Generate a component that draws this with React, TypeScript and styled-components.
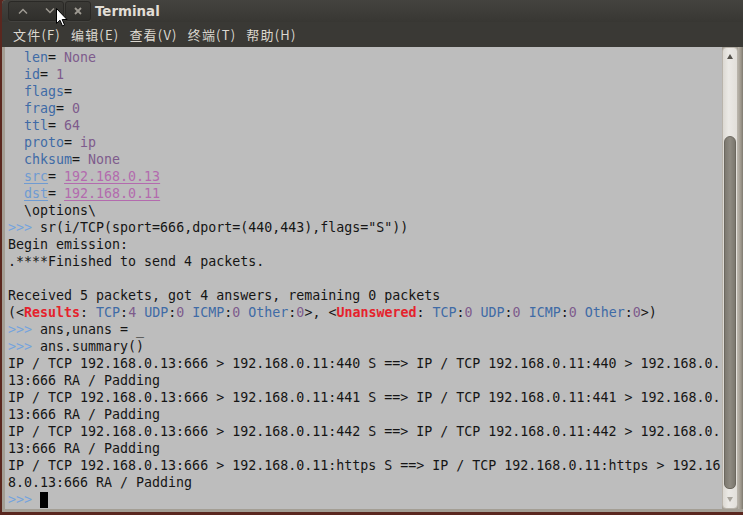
import React from "react";
import styled, { createGlobalStyle, css } from "styled-components";

const GlobalStyle = createGlobalStyle`
  html, body { margin: 0; padding: 0; }
  body { background: #5a271f; width: 743px; height: 515px; overflow: hidden; }
`;

const Desktop = styled.div`
  width: 743px;
  height: 515px;
  background: #5a271f;
  position: relative;
  overflow: hidden;
`;

const Window = styled.div`
  margin-left: 2px;
  width: 741px;
  height: 512px;
  display: flex;
  flex-direction: column;
  background: #a39e94;
  border-radius: 4px 0 0 0;
  overflow: hidden;
`;

const TitleBar = styled.div`
  height: 22px;
  flex: none;
  display: flex;
  align-items: center;
  padding-left: 6px;
  background: linear-gradient(#44433f, #383733);
  font-family: "DejaVu Sans", sans-serif;
`;

const ButtonGroup = styled.div<{ $gap?: number }>`
  display: flex;
  height: 18px;
  margin-left: ${(p) => p.$gap ?? 0}px;
  border-radius: 3px;
  overflow: hidden;
  border: 1px solid #2a2926;
  background: linear-gradient(#3b3a36, #302f2c);
  box-shadow: 0 1px 0 rgba(255, 255, 255, 0.06);
`;

const WinButton = styled.div<{ $w: number }>`
  width: ${(p) => p.$w}px;
  display: flex;
  align-items: center;
  justify-content: center;
  color: #9e9a92;
`;

const Title = styled.div`
  margin-left: 4px;
  font-weight: bold;
  font-size: 13.4px;
  color: #e2ded6;
`;

const MenuBar = styled.div`
  height: 25px;
  flex: none;
  display: flex;
  align-items: center;
  gap: 10px;
  padding-left: 11px;
  background: #3a3935;
  font-family: "Noto Sans CJK SC", "DejaVu Sans", sans-serif;
  font-size: 13px;
  color: #dcd8d0;
`;

const MenuItem = styled.span`
  letter-spacing: 1.2px;
`;

const Body = styled.div`
  flex: 1;
  display: flex;
  min-height: 0;
  padding: 0 0 3px 3px;
`;

const Terminal = styled.div`
  flex: 1;
  background: #bdbdbd;
  padding: 2px 0 0 3px;
  font-family: "DejaVu Sans Mono", monospace;
  font-size: 13.3px;
  color: #151515;
  overflow: hidden;
`;

const Line = styled.div`
  height: 17px;
  line-height: 17px;
  white-space: pre;
  display: flex;
  align-items: center;
`;

type Tone = "plain" | "key" | "val" | "prompt" | "red" | "lkey" | "lval";

const toneColor: Record<Tone, string> = {
  plain: "#151515",
  key: "#3f6ba6",
  val: "#7e5b8c",
  prompt: "#74a3dd",
  red: "#e5222c",
  lkey: "#6f9bd2",
  lval: "#b36bae",
};

const Seg = styled.span<{ $tone: Tone }>`
  color: ${(p) => toneColor[p.$tone]};
  ${(p) =>
    p.$tone === "red" &&
    css`
      font-weight: bold;
    `}
  ${(p) =>
    (p.$tone === "lkey" || p.$tone === "lval") &&
    css`
      text-decoration: underline;
      text-underline-offset: 2px;
    `}
`;

const Cursor = styled.span`
  display: inline-block;
  width: 8px;
  height: 16px;
  background: #000;
`;

const Scrollbar = styled.div`
  width: 16px;
  flex: none;
  box-sizing: border-box;
  background: linear-gradient(90deg, #dcd9d3, #ebe9e5 40%, #e2dfda);
  border: 1px solid #b9b4ab;
  border-radius: 4px;
  display: flex;
  flex-direction: column;
  align-items: center;
  padding: 2px 0 2px;
`;

const Arrow = styled.div<{ $down?: boolean }>`
  width: 0;
  height: 0;
  margin: 4px 0;
  border-left: 3.5px solid transparent;
  border-right: 3.5px solid transparent;
  ${(p) =>
    p.$down
      ? css`
          border-top: 5px solid #a8a49c;
        `
      : css`
          border-bottom: 5px solid #55524c;
        `}
`;

const Track = styled.div`
  flex: 1;
  width: 100%;
  display: flex;
  flex-direction: column;
  justify-content: flex-end;
  padding: 0 1px;
  box-sizing: border-box;
`;

const Thumb = styled.div`
  height: 351px;
  margin-bottom: 4px;
  border-radius: 6px 6px 5px 5px;
  background: linear-gradient(90deg, #7d7970, #8f8b82 50%, #7b776e);
  border: 1px solid #6c685f;
`;

const RightFrame = styled.div`
  width: 5px;
  flex: none;
  background: linear-gradient(90deg, #b7b2a8, #9c968b 60%, #7f7a70);
`;

const Pointer = styled.svg`
  position: absolute;
  left: 56px;
  top: 8px;
`;

type Seg_ = [string, Tone];
const S = (t: string, tone: Tone = "plain"): Seg_ => [t, tone];

const field = (k: string, v: string, link = false): Seg_[] => [
  S("  "),
  S(k, link ? "lkey" : "key"),
  S("= "),
  S(v, link ? "lval" : "val"),
];

const stats = (a: string): Seg_[] => [
  S("TCP", "key"),
  S(":"),
  S(a, "val"),
  S(" "),
  S("UDP", "key"),
  S(":"),
  S("0", "val"),
  S(" "),
  S("ICMP", "key"),
  S(":"),
  S("0", "val"),
  S(" "),
  S("Other", "key"),
  S(":"),
  S("0", "val"),
];

const lines: Seg_[][] = [
  field("len", "None"),
  field("id", "1"),
  [S("  "), S("flags", "key"), S("=")],
  field("frag", "0"),
  field("ttl", "64"),
  field("proto", "ip"),
  field("chksum", "None"),
  field("src", "192.168.0.13", true),
  field("dst", "192.168.0.11", true),
  [S("  \\options\\")],
  [S(">>>", "prompt"), S(' sr(i/TCP(sport=666,dport=(440,443),flags="S"))')],
  [S("Begin emission:")],
  [S(".****Finished to send 4 packets.")],
  [S("")],
  [S("Received 5 packets, got 4 answers, remaining 0 packets")],
  [
    S("(<"),
    S("Results", "red"),
    S(": "),
    ...stats("4"),
    S(">, <"),
    S("Unanswered", "red"),
    S(": "),
    ...stats("0"),
    S(">)"),
  ],
  [S(">>>", "prompt"), S(" ans,unans = _")],
  [S(">>>", "prompt"), S(" ans.summary()")],
  [S("IP / TCP 192.168.0.13:666 > 192.168.0.11:440 S ==> IP / TCP 192.168.0.11:440 > 192.168.0.")],
  [S("13:666 RA / Padding")],
  [S("IP / TCP 192.168.0.13:666 > 192.168.0.11:441 S ==> IP / TCP 192.168.0.11:441 > 192.168.0.")],
  [S("13:666 RA / Padding")],
  [S("IP / TCP 192.168.0.13:666 > 192.168.0.11:442 S ==> IP / TCP 192.168.0.11:442 > 192.168.0.")],
  [S("13:666 RA / Padding")],
  [S("IP / TCP 192.168.0.13:666 > 192.168.0.11:https S ==> IP / TCP 192.168.0.11:https > 192.16")],
  [S("8.0.13:666 RA / Padding")],
];

const menus = ["文件(F)", "编辑(E)", "查看(V)", "终端(T)", "帮助(H)"];

export default function App() {
  return (
    <Desktop>
      <GlobalStyle />
      <Window>
        <TitleBar>
          <ButtonGroup>
            <WinButton $w={27}>
              <svg width="10" height="6" viewBox="0 0 10 6">
                <path d="M1 5.5 L5 1.5 L9 5.5" fill="none" stroke="currentColor" strokeWidth="1.5" />
              </svg>
            </WinButton>
            <WinButton $w={27}>
              <svg width="10" height="6" viewBox="0 0 10 6">
                <path d="M1 0.5 L5 4.5 L9 0.5" fill="none" stroke="currentColor" strokeWidth="1.5" />
              </svg>
            </WinButton>
          </ButtonGroup>
          <ButtonGroup $gap={1}>
            <WinButton $w={24}>
              <svg width="8" height="8" viewBox="0 0 8 8">
                <path d="M1 1 L7 7 M7 1 L1 7" fill="none" stroke="currentColor" strokeWidth="1.8" />
              </svg>
            </WinButton>
          </ButtonGroup>
          <Title>Terminal</Title>
        </TitleBar>
        <MenuBar>
          {menus.map((m) => (
            <MenuItem key={m}>{m}</MenuItem>
          ))}
        </MenuBar>
        <Body>
          <Terminal>
            {lines.map((segs, i) => (
              <Line key={i}>
                {segs.map(([t, tone], j) => (
                  <Seg key={j} $tone={tone}>
                    {t}
                  </Seg>
                ))}
              </Line>
            ))}
            <Line>
              <Seg $tone="prompt">{">>>"}</Seg>
              <Seg $tone="plain"> </Seg>
              <Cursor />
            </Line>
          </Terminal>
          <Scrollbar>
            <Arrow />
            <Track>
              <Thumb />
            </Track>
            <Arrow $down />
          </Scrollbar>
          <RightFrame />
        </Body>
      </Window>
      <Pointer width="12" height="19" viewBox="0 0 12 19">
        <path d="M0.5 0.5 L0.5 15.5 L4 12.2 L6.5 18 L8.6 17.1 L6.2 11.5 L11 11.5 Z" fill="#fff" stroke="#000" strokeWidth="1" />
      </Pointer>
    </Desktop>
  );
}
